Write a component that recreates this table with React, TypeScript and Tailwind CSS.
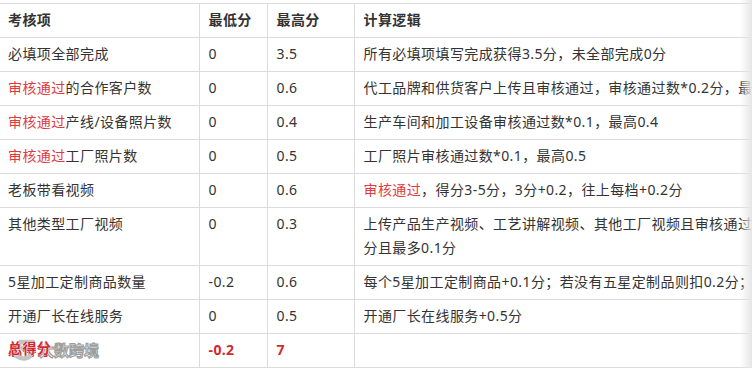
import type { ReactNode } from "react";

const RED = "text-[#e0393e]";

interface Row {
  item: ReactNode;
  min: string;
  max: string;
  logic: ReactNode;
}

const Pass = () => <span className={RED}>审核通过</span>;

const rows: Row[] = [
  { item: "必填项全部完成", min: "0", max: "3.5", logic: "所有必填项填写完成获得3.5分，未全部完成0分" },
  {
    item: (
      <>
        <Pass />的合作客户数
      </>
    ),
    min: "0",
    max: "0.6",
    logic: "代工品牌和供货客户上传且审核通过，审核通过数*0.2分，最高0.6分",
  },
  {
    item: (
      <>
        <Pass />产线/设备照片数
      </>
    ),
    min: "0",
    max: "0.4",
    logic: "生产车间和加工设备审核通过数*0.1，最高0.4",
  },
  {
    item: (
      <>
        <Pass />工厂照片数
      </>
    ),
    min: "0",
    max: "0.5",
    logic: "工厂照片审核通过数*0.1，最高0.5",
  },
  {
    item: "老板带看视频",
    min: "0",
    max: "0.6",
    logic: (
      <>
        <Pass />，得分3-5分，3分+0.2，往上每档+0.2分
      </>
    ),
  },
  {
    item: "其他类型工厂视频",
    min: "0",
    max: "0.3",
    logic: (
      <>
        上传产品生产视频、工艺讲解视频、其他工厂视频且审核通过，每个视频+0.05
        <br />
        分且最多0.1分
      </>
    ),
  },
  {
    item: "5星加工定制商品数量",
    min: "-0.2",
    max: "0.6",
    logic: "每个5星加工定制商品+0.1分；若没有五星定制品则扣0.2分；最低-0.2分",
  },
  { item: "开通厂长在线服务", min: "0", max: "0.5", logic: "开通厂长在线服务+0.5分" },
];

const cell = "border border-[#dcdcdc] align-top pt-[4px] pb-[5px] px-[9px] leading-[24px]";

export default function App() {
  return (
    <div
      className="relative h-[368px] w-[752px] overflow-hidden bg-white pt-[3px] text-[14px] tracking-[0.4px] text-[#333]"
      style={{ fontFamily: '"Noto Sans", "Noto Sans CJK SC", sans-serif' }}
    >
      <table className="w-[900px] table-fixed border-collapse">
        <colgroup>
          <col className="w-[199px]" />
          <col className="w-[68px]" />
          <col className="w-[87px]" />
          <col />
        </colgroup>
        <thead>
          <tr>
            <th className={`${cell} border-l-0 pl-[8px] text-left font-bold`}>考核项</th>
            <th className={`${cell} text-left font-bold`}>最低分</th>
            <th className={`${cell} text-left font-bold`}>最高分</th>
            <th className={`${cell} text-left font-bold`}>计算逻辑</th>
          </tr>
        </thead>
        <tbody>
          {rows.map((r, i) => (
            <tr key={i}>
              <td className={`${cell} border-l-0 pl-[8px]`}>{r.item}</td>
              <td className={cell}>{r.min}</td>
              <td className={cell}>{r.max}</td>
              <td className={`${cell} whitespace-nowrap`}>{r.logic}</td>
            </tr>
          ))}
          <tr>
            <td className={`${cell} border-l-0 pl-[8px] font-bold text-[#d3282f]`}>总得分</td>
            <td className={`${cell} font-bold text-[#d3282f]`}>-0.2</td>
            <td className={`${cell} font-bold text-[#d3282f]`}>7</td>
            <td className={cell}></td>
          </tr>
        </tbody>
      </table>

      {/* watermark over the total row */}
      <div className="pointer-events-none absolute left-[11px] top-[338px] flex items-center">
        <svg width="28" height="24" viewBox="0 0 28 24">
          <path
            d="M22 4 H9 L7 11 C13 9 20 10 20 15 C20 21 11 22 5 18"
            fill="none"
            stroke="#c4c4c4"
            strokeWidth="4.5"
            strokeLinecap="round"
            strokeLinejoin="round"
          />
        </svg>
        <span
          className="text-[15px] font-bold tracking-[0px] text-white"
          style={{ WebkitTextStroke: "1.2px #9e9e9e" }}
        >
          大数跨境
        </span>
      </div>
      <div
        className="pointer-events-none absolute left-[8px] top-[337px] text-[14px] font-bold text-[#d3282f]"
        style={{ textShadow: "0 0 1px #fff, 0 0 1px #fff" }}
      >
        总得分
      </div>

      {/* right edge fade */}
      <div className="pointer-events-none absolute right-0 top-0 h-full w-[12px] bg-gradient-to-r from-white/0 to-[#e6e6e6]" />
    </div>
  );
}
